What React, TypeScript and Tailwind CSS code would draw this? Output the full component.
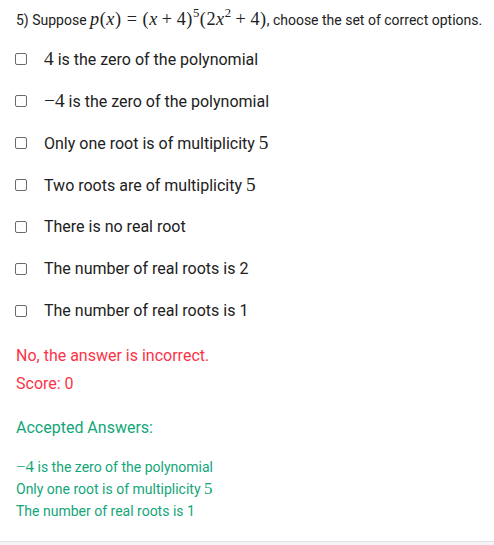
import React from "react";

const M = ({ children }: { children: React.ReactNode }) => (
  <span className="font-['Liberation_Serif','DejaVu_Serif',serif] text-[1.21em]">{children}</span>
);
const I = ({ children }: { children: React.ReactNode }) => (
  <span className="italic">{children}</span>
);
const Op = ({ children, w }: { children: React.ReactNode; w: "rel" | "bin" }) => (
  <span className={w === "rel" ? "mx-[0.28em]" : "mx-[0.22em]"}>{children}</span>
);
const Sup = ({ children }: { children: React.ReactNode }) => (
  <span className="text-[0.7em] relative top-[-0.6em]">{children}</span>
);

const options: React.ReactNode[] = [
  <><M>4</M> is the zero of the polynomial</>,
  <><M>−4</M> is the zero of the polynomial</>,
  <>Only one root is of multiplicity <M>5</M></>,
  <>Two roots are of multiplicity <M>5</M></>,
  <>There is no real root</>,
  <>The number of real roots is 2</>,
  <>The number of real roots is 1</>,
];

export default function App() {
  return (
    <div className="w-[494px] h-[545px] bg-white font-['Roboto',sans-serif] text-[#212121] flex flex-col">
      <div className="flex-1 px-4 pt-[10px]">
        <div className="text-[14px] leading-[20px] h-[20px] whitespace-nowrap">
          5) Suppose{" "}
          <span className="font-['Liberation_Serif','DejaVu_Serif',serif] text-[1.3em] leading-[1] tracking-[0.03em]">
            <I>p</I>(<I>x</I>)<Op w="rel">=</Op>(<I>x</I><Op w="bin">+</Op>4)<Sup>5</Sup>(2<I>x</I>
            <Sup>2</Sup><Op w="bin">+</Op>4)
          </span>
          , choose the set of correct options.
        </div>
        <div className="mt-[8px] flex flex-col">
          {options.map((o, i) => (
            <div key={i} className="h-[42px] flex items-center">
              <div className="w-[12px] h-[12px] border-[1.5px] border-[#6b6b6b] rounded-[2px] mr-[17px] ml-[-1px] shrink-0" />
              <div className="text-[16px] leading-[20px]">{o}</div>
            </div>
          ))}
        </div>
        <div className="mt-[14px] text-[16px] leading-[20px] text-[#fb3347]">No, the answer is incorrect.</div>
        <div className="mt-[8px] text-[16px] leading-[20px] text-[#fb3347]">Score: 0</div>
        <div className="mt-[24px] text-[16px] leading-[20px] text-[#12a67a]">Accepted Answers:</div>
        <div className="mt-[18px] text-[14px] leading-[21.3px] text-[#12a67a]">
          <div><M>−4</M> is the zero of the polynomial</div>
          <div>Only one root is of multiplicity <M>5</M></div>
          <div>The number of real roots is 1</div>
        </div>
      </div>
      <div className="h-[4px] border-t border-[#e2e3e8] bg-[#f4f4f7]" />
    </div>
  );
}
